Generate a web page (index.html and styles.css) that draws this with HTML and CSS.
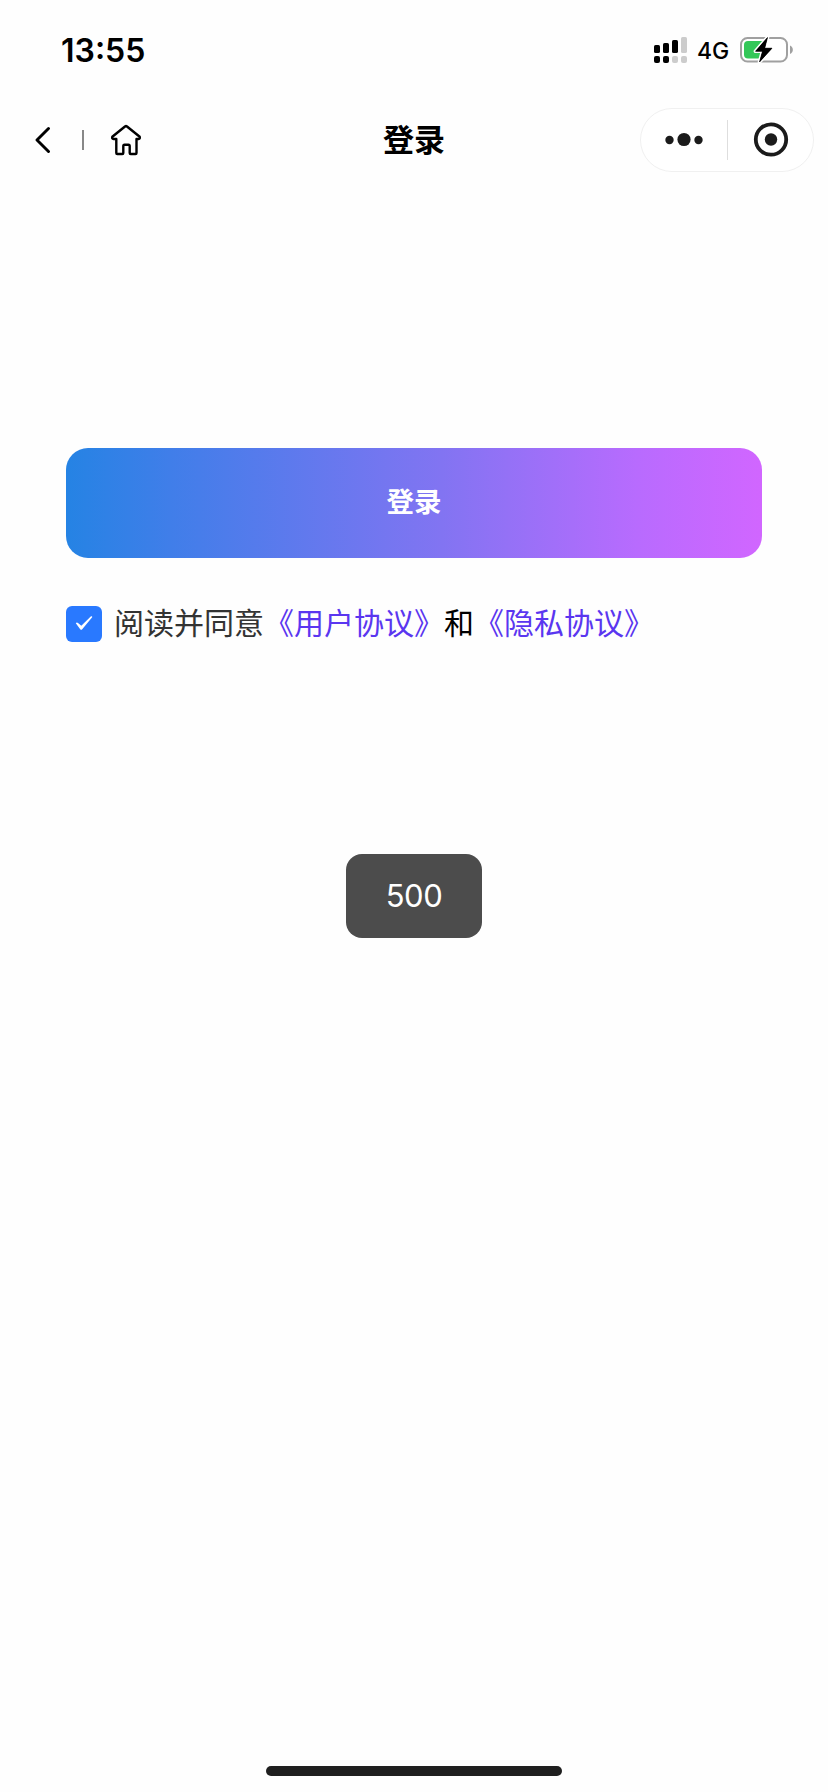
FILE: index.html
```
<!DOCTYPE html>
<html lang="zh-CN">
<head>
<meta charset="utf-8">
<title>登录</title>
<link rel="stylesheet" href="styles.css">
</head>
<body>
<div class="screen">
  <div class="status">
    <span class="time">13:55</span>
    <div class="indicators">
      <svg class="signal" width="33" height="26" viewBox="0 0 33 26">
        <g fill="#000"><rect x="0" y="8" width="6" height="8" rx="1.6"/><rect x="9" y="6" width="6" height="10" rx="1.6"/><rect x="18" y="3" width="6" height="13" rx="1.6"/><rect x="0" y="19" width="6" height="7" rx="2"/><rect x="9" y="19" width="6" height="7" rx="2"/></g>
        <g fill="#ccc"><rect x="27" y="0" width="6" height="16" rx="1.6"/><rect x="18" y="19" width="6" height="7" rx="2"/><rect x="27" y="19" width="6" height="7" rx="2"/></g>
      </svg>
      <span class="network">4G</span>
      <svg class="battery" width="54" height="26" viewBox="0 0 54 26">
        <rect x="1" y="1" width="46" height="23.5" rx="6.5" fill="#fff" stroke="#a0a0a0" stroke-width="2"/>
        <path d="M50 8.5C53.8 10 53.8 15.500 50 17Z" fill="#a0a0a0"/>
        <path d="M8 4H23V21.500H8Q4 21.500 4 17.500V8Q4 4 8 4Z" fill="#34c759"/>
        <path d="M27.500 .5L15.500 14.300H22.500L19.500 25L32 11.200H24.700Z" fill="#000" stroke="#fff" stroke-width="3.600" stroke-linejoin="round" paint-order="stroke"/>
        <path d="M27.500 .5L15.500 14.300H22.500L19.500 25L32 11.200H24.700Z" fill="#000" stroke="#000" stroke-width=".6" stroke-linejoin="round"/>
      </svg>
    </div>
  </div>
  <div class="nav">
    <div class="nav-left">
      <svg width="16" height="28" viewBox="0 0 16 28" fill="none" stroke="#000" stroke-width="2.900" stroke-linecap="round" stroke-linejoin="round"><path d="M13.500 2.500L2 14L13.500 25.500"/></svg>
      <i class="nav-line"></i>
      <svg width="32" height="32" viewBox="0 0 32 32" fill="none" stroke="#000" stroke-width="2.400" stroke-linecap="round" stroke-linejoin="round"><path d="M15.300 2.300Q16 1.700 16.700 2.300L29.700 12.800Q30.300 14.800 28.500 15H26.500V29Q26.500 30 25.500 30H20.700Q19.700 30 19.700 29V22.200Q19.700 20.800 18.500 20.800H14.500Q13.300 20.800 13.300 22.200V29Q13.300 30 12.300 30H7.300Q6.300 30 6.300 29V15H3.600Q1.700 14.800 2.300 12.800Z"/></svg>
    </div>
    <h1 class="title">登录</h1>
    <div class="capsule">
      <svg width="174" height="64" viewBox="0 0 174 64">
        <rect x=".5" y=".5" width="173" height="63" rx="31.500" fill="#fff" stroke="#f0f0f0"/>
        <path d="M87.500 12V52" stroke="#dedede"/>
        <g fill="#1b1b1b"><circle cx="29.500" cy="32" r="4.200"/><circle cx="44" cy="31.500" r="6.600"/><circle cx="58.500" cy="32" r="4.200"/><circle cx="131" cy="31.500" r="6.200"/></g>
        <circle cx="131" cy="31.500" r="15.200" fill="none" stroke="#1b1b1b" stroke-width="3.800"/>
      </svg>
    </div>
  </div>
  <div class="form">
    <button class="login">登录</button>
    <div class="agree">
      <span class="check"><svg width="36" height="36" viewBox="0 0 36 36"><path d="M9.800 17.200Q10.800 16 12 17L15.300 19.800L25 10.300Q26.400 9.800 26.200 11.200L16.200 23.300Q15.200 24.400 14.200 23.300Z" fill="#fff"/></svg></span>
      <span class="agree-text">阅读并同意<a class="link">《用户协议》</a><span class="and">和</span><a class="link">《隐私协议》</a></span>
    </div>
  </div>
  <div class="toast">500</div>
  <div class="home-indicator"></div>
</div>
</body>
</html>
```
FILE: styles.css
```
* { box-sizing: border-box; }
body { margin: 0; background: #fefefe; font-family: Inter, "Noto Sans CJK SC", sans-serif; }
.screen { width: 828px; height: 1792px; display: flex; flex-direction: column; align-items: center; background: #fefefe; }
.status { width: 100%; height: 96px; padding: 37px 34px 0 61px; display: flex; justify-content: space-between; align-items: flex-start; }
.time { font-size: 32px; line-height: 28px; font-weight: 600; color: #000; }
.indicators { display: flex; align-items: flex-start; }
.network { width: 32px; margin: 0 11px 0 10px; font-size: 23px; line-height: 28px; font-weight: 500; white-space: nowrap; }
.signal, .battery { display: block; }
.nav { width: 100%; height: 88px; padding: 0 14px 0 35px; display: grid; grid-template-columns: 174px 1fr 174px; align-items: center; }
.nav-left { display: flex; align-items: center; }
.nav-left svg { display: block; }
.nav-line { width: 2px; height: 20px; margin: 0 26px 0 31px; background: #888; }
.title { margin: 0; padding: 0 21px 4px 0; text-align: center; font-size: 31px; line-height: 44px; font-weight: 700; font-family: "Noto Sans CJK SC", sans-serif; color: #000; }
.capsule svg { display: block; }
.form { width: 696px; margin-top: 264px; }
.login { display: block; width: 100%; height: 110px; border: 0; border-radius: 22px; padding: 0 0 6px; background: linear-gradient(90deg, #2583e4 0%, #407ee9 15%, #8274f2 54%, #b86bfe 82%, #d166ff 100%); color: #fff; font: 700 27.500px/40px "Noto Sans CJK SC", sans-serif; }
.agree { height: 36px; margin-top: 48px; display: flex; align-items: center; gap: 12px; }
.check { width: 36px; height: 36px; border-radius: 6px; background: #2979ff; }
.check svg { display: block; }
.agree-text { padding-bottom: 6px; font: 400 30px/36px "Noto Sans CJK SC", sans-serif; color: #333; white-space: nowrap; }
.link { color: #5a36f0; }
.and { color: #000; }
.toast { width: 136px; height: 84px; margin-top: 212px; border-radius: 16px; background: #4c4c4c; color: #fff; font-size: 31px; letter-spacing: -.5px; line-height: 84px; text-align: center; }
.home-indicator { width: 296px; height: 10px; margin-top: auto; margin-bottom: 16px; border-radius: 5px; background: #1f1f1f; }
```
